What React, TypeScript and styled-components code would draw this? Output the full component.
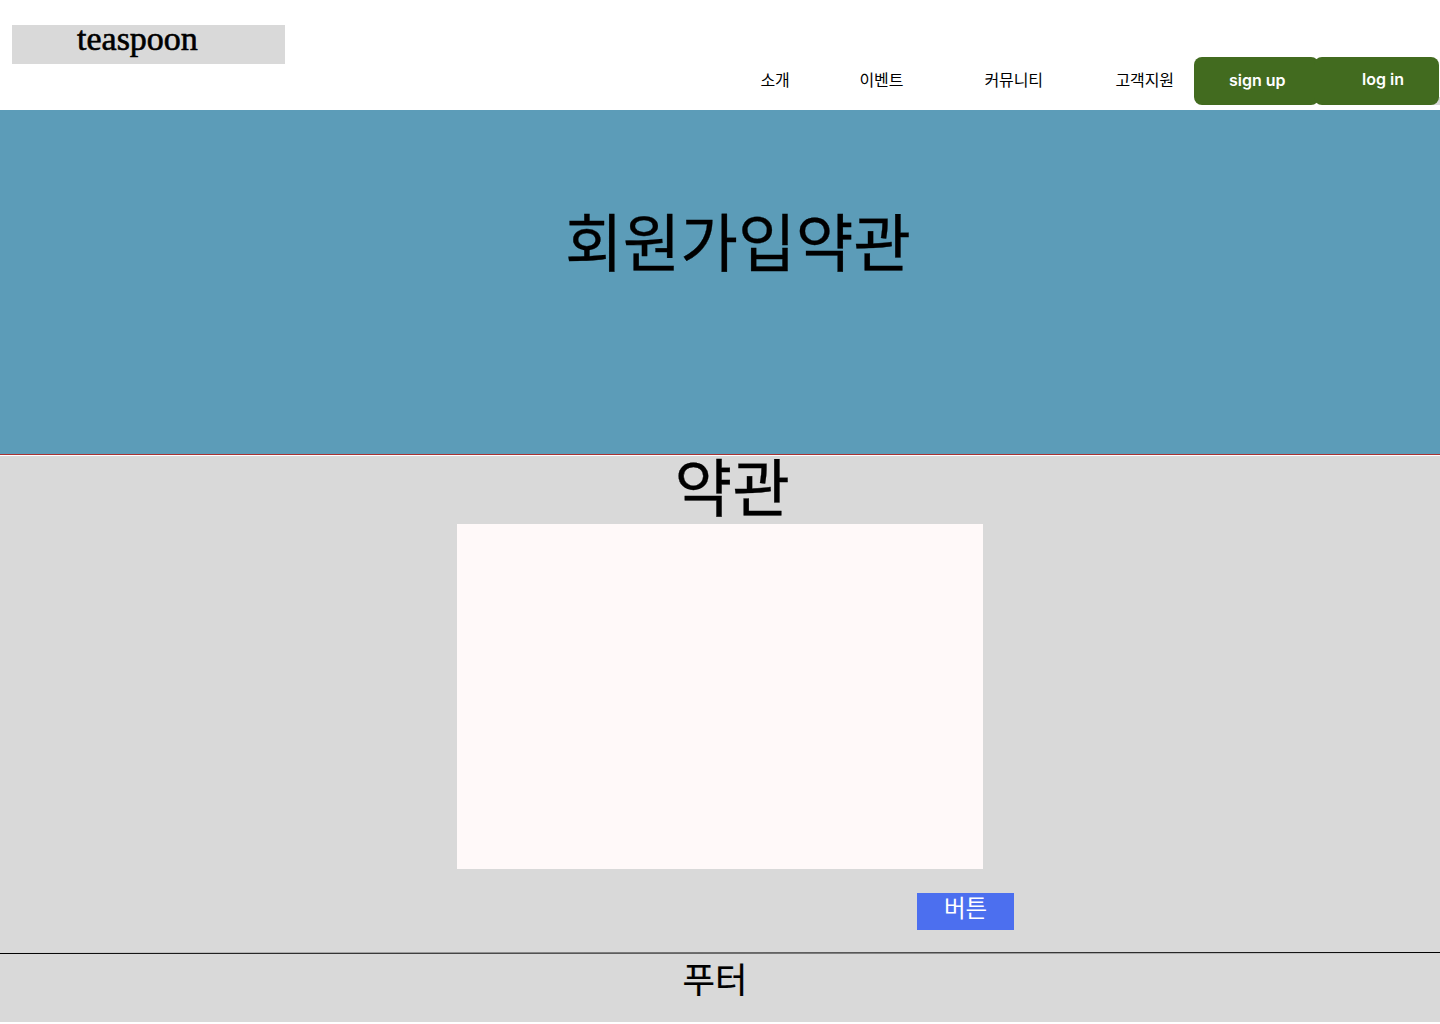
import React from "react";
import styled, { createGlobalStyle } from "styled-components";

const GlobalStyle = createGlobalStyle`
  * { box-sizing: border-box; }
  body { margin: 0; background: #fff; }
`;
const Page = styled.div`
  width: 1440px;
  height: 1024px;
  overflow: hidden;
  display: flex;
  flex-direction: column;
  color: #000;
  font-family: Inter, "Noto Sans CJK KR", sans-serif;
`;
const Header = styled.header`
  height: 110px;
  flex: none;
  display: flex;
  justify-content: space-between;
  padding: 0 0 0 12px;
`;
const Logo = styled.div`
  width: 273px;
  height: 39px;
  margin-top: 25px;
  padding-left: 65px;
  background: #d9d9d9;
  font: 400 34px/27px "Liberation Serif", serif;
  -webkit-text-stroke: 0.6px #000;
`;
const Nav = styled.nav`
  display: flex;
  height: 48px;
  margin-top: 57px;
`;
const NavItem = styled.a<{ $width: number }>`
  width: ${(p) => p.$width}px;
  padding-left: 0.5px;
  font-size: 16px;
  letter-spacing: -0.1px;
  line-height: 46px;
  white-space: nowrap;
`;
const AuthGroup = styled.div`
  display: flex;
  width: 246px;
  background: linear-gradient(#d9d9d9, #d9d9d9) right bottom / 8px 8px no-repeat;
`;
const AuthButton = styled.button<{ $left: number; $lift: number }>`
  width: 125px;
  height: 48px;
  border: 0;
  border-radius: 8px;
  padding: 0 0 ${(p) => p.$lift}px ${(p) => p.$left}px;
  background: #426b1f;
  color: #fff;
  text-align: left;
  font: 600 16px/24px Inter, sans-serif;

  & + & {
    margin-left: -5px;
  }
`;
const Hero = styled.section`
  height: 344px;
  flex: none;
  padding: 95px 0 0 565px;
  background: #5c9cb8;
`;
const Title = styled.h1`
  margin: 0;
  font-size: 62.7px;
  font-weight: 400;
  line-height: 77px;
  -webkit-text-stroke: 0.3px #000;
`;
const Terms = styled.main`
  height: 498px;
  flex: none;
  display: flex;
  flex-direction: column;
  border-top: 1px solid #a33;
  background: #d9d9d9;
  box-shadow: inset 0 1px #fff;
`;
const TermsTitle = styled(Title)`
  height: 69px;
  margin-left: 674.5px;
  line-height: 67px;
`;
const TermsBox = styled.div`
  width: 526px;
  height: 345px;
  margin: 0 0 24px 457px;
  background: #fff9f9;
`;
const Submit = styled.button`
  width: 97px;
  height: 37px;
  margin-left: 917px;
  border: 0;
  padding: 0 0 6px;
  background: #4c6fef;
  color: #fff;
  font: 400 23.5px/29px Inter, "Noto Sans CJK KR", sans-serif;
`;
const Footer = styled.footer`
  height: 70px;
  flex: none;
  background: #d9d9d9;
`;
const FooterText = styled.p`
  margin: 5px 0 0 682.5px;
  font-size: 35.3px;
  line-height: 44px;
  -webkit-text-stroke: 0.2px #000;
`;
const Rule = styled.svg`
  display: block;
  height: 2px;
  width: 1440px;
`;

export default function App() {
  return (
    <Page>
      <GlobalStyle />
      <Header>
        <Logo>teaspoon</Logo>
        <Nav>
          <NavItem $width={99}>소개</NavItem>
          <NavItem $width={125}>이벤트</NavItem>
          <NavItem $width={131}>커뮤니티</NavItem>
          <NavItem $width={79}>고객지원</NavItem>
          <AuthGroup>
            <AuthButton $left={35} $lift={2}>sign up</AuthButton>
            <AuthButton $left={48} $lift={4}>log in</AuthButton>
          </AuthGroup>
        </Nav>
      </Header>
      <Hero><Title>회원가입약관</Title></Hero>
      <Terms>
        <TermsTitle as="h2">약관</TermsTitle>
        <TermsBox />
        <Submit>버튼</Submit>
      </Terms>
      <Footer>
        <Rule viewBox="0 0 1440 2"><path d="M0 1.5L1440 .5" stroke="#000" /></Rule>
        <FooterText>푸터</FooterText>
      </Footer>
    </Page>
  );
}
